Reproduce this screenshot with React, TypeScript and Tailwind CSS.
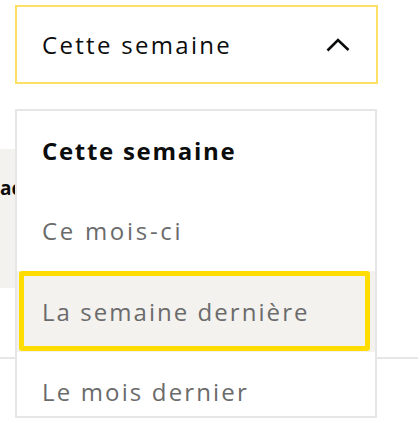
import React from "react";

const font = { fontFamily: '"Open Sans", "Noto Sans", sans-serif' };

export default function App() {
  return (
    <div className="relative w-[418px] h-[442px] bg-white overflow-hidden" style={font}>
      {/* underlying page */}
      <div className="pt-[5px] pl-[15px]">
        <button className="w-[363px] h-[79px] border-2 border-[#ffe066] bg-white flex items-center justify-between pl-[25px] pr-[26px]">
          <span className="text-[24px] leading-[30px] tracking-[2.3px] text-[#0b0c0c]">Cette semaine</span>
          <svg width="24" height="14" viewBox="0 0 24 14" fill="none">
            <polyline points="1.5,12.5 12,2 22.5,12" stroke="#0b0c0c" strokeWidth="2.6" />
          </svg>
        </button>
      </div>
      <div className="mt-[65px] w-[340px] h-[139px] bg-[#f3f2ee] pt-[27px] overflow-hidden">
        <div className="text-[19px] leading-[24px] font-bold text-[#0b0c0c] whitespace-nowrap">actions</div>
      </div>
      <div className="mt-[69px] h-[2px] bg-[#e6e6e6]" />

      {/* dropdown menu */}
      <div className="absolute top-[109px] left-[15px] w-[362px] h-[309px] border-2 border-[#e6e6e6] bg-white overflow-hidden">
        <div className="h-[80px] flex items-center pl-[25px]">
          <span className="text-[24px] leading-[30px] tracking-[1.7px] font-bold text-[#0b0c0c]">Cette semaine</span>
        </div>
        <div className="h-[80px] flex items-center pl-[25px]">
          <span className="text-[24px] leading-[30px] tracking-[2.7px] text-[#6b6b6b]">Ce mois-ci</span>
        </div>
        <div className="relative h-[81px] bg-[#f3f2ee] flex items-center pl-[25px]">
          <div className="absolute left-[2px] right-[5px] top-0 bottom-[1px] border-[5px] border-[#ffdd00] rounded-[3px]" />
          <span className="text-[24px] leading-[30px] tracking-[2.05px] text-[#6b6b6b]">La semaine dernière</span>
        </div>
        <div className="h-[80px] flex items-center pl-[25px]">
          <span className="text-[24px] leading-[30px] tracking-[2.15px] text-[#6b6b6b]">Le mois dernier</span>
        </div>
      </div>
    </div>
  );
}
